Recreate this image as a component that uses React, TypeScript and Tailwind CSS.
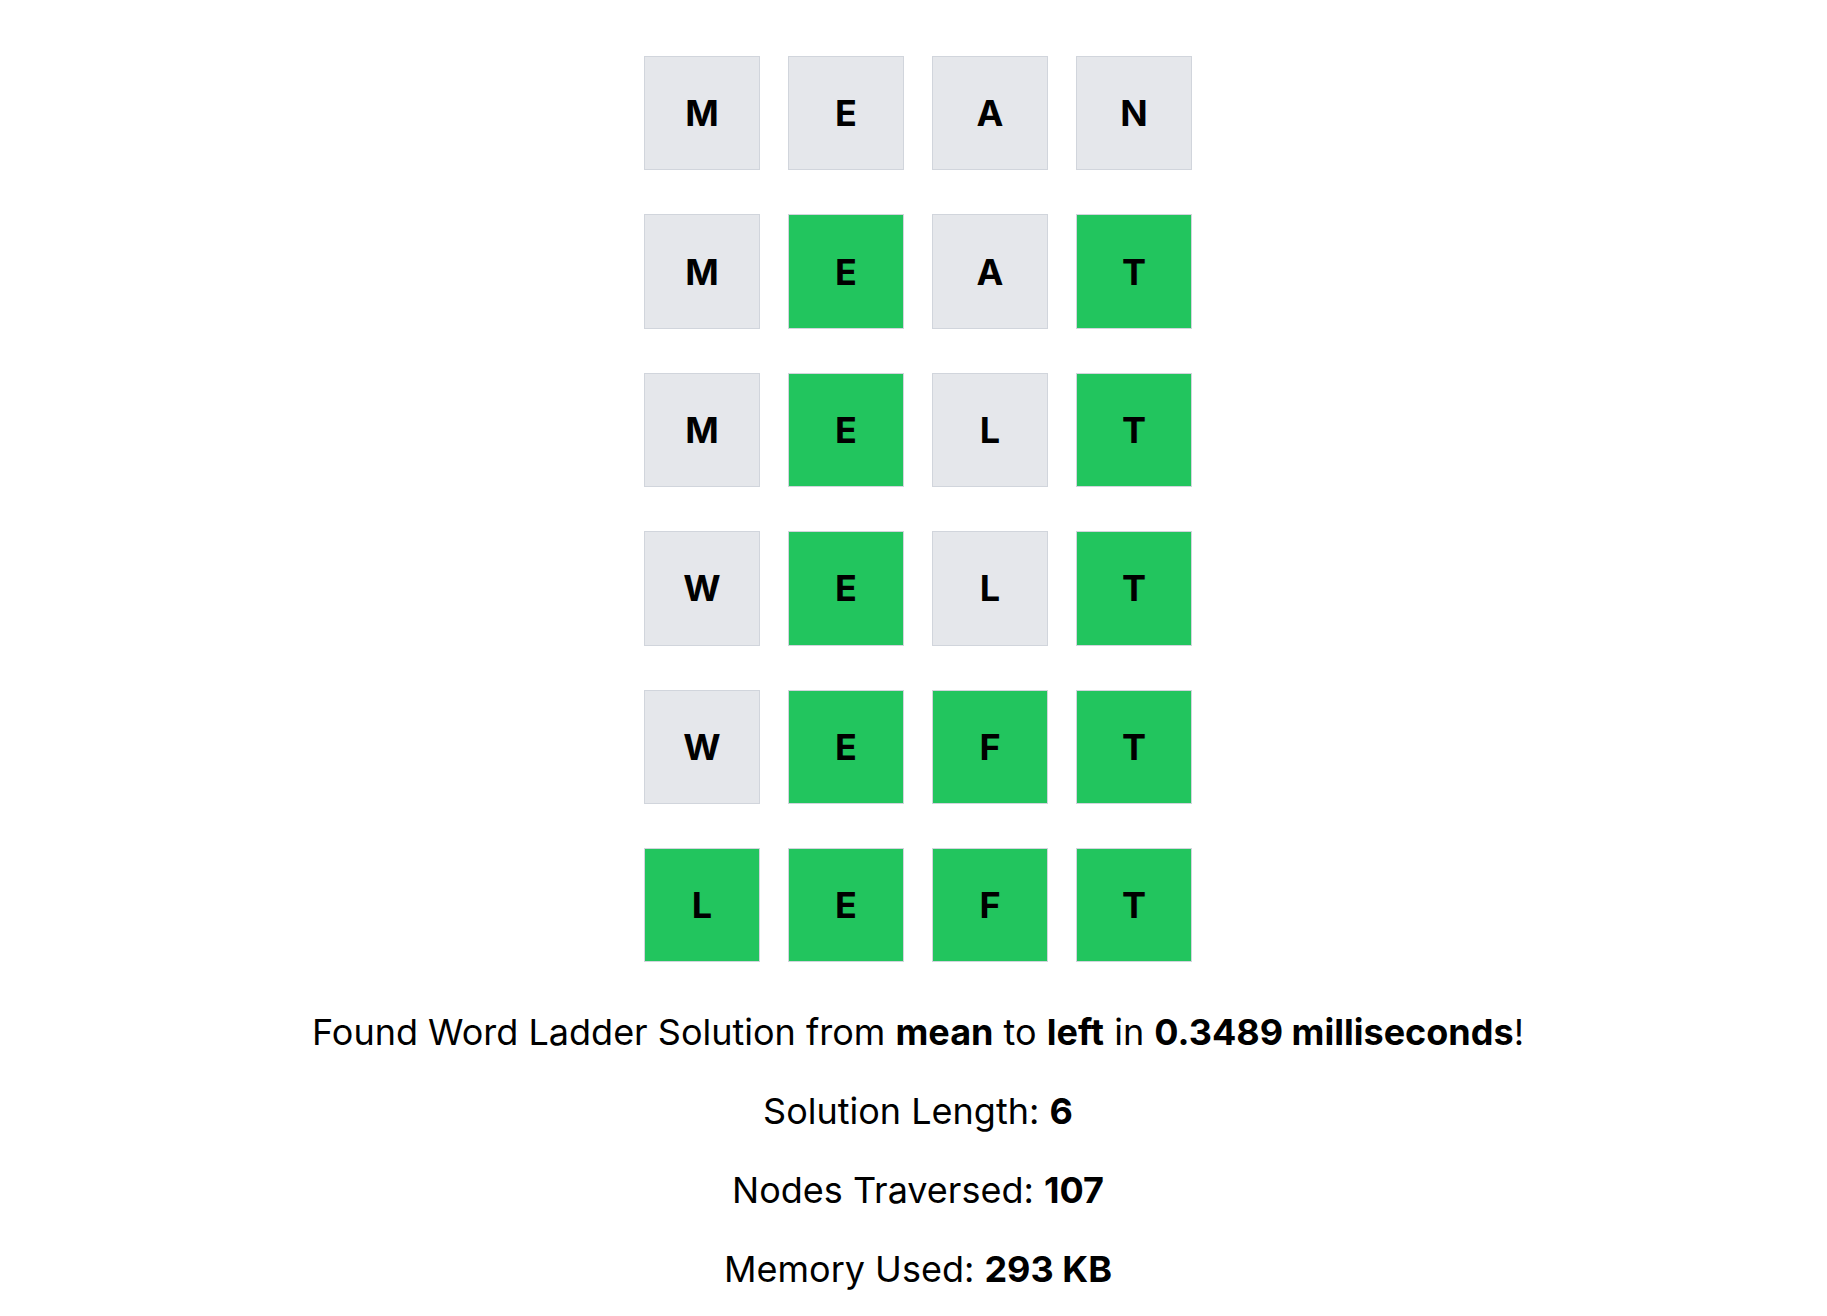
import React from "react";

const rows: { l: string; g: boolean }[][] = [
  [
    { l: "M", g: false },
    { l: "E", g: false },
    { l: "A", g: false },
    { l: "N", g: false },
  ],
  [
    { l: "M", g: false },
    { l: "E", g: true },
    { l: "A", g: false },
    { l: "T", g: true },
  ],
  [
    { l: "M", g: false },
    { l: "E", g: true },
    { l: "L", g: false },
    { l: "T", g: true },
  ],
  [
    { l: "W", g: false },
    { l: "E", g: true },
    { l: "L", g: false },
    { l: "T", g: true },
  ],
  [
    { l: "W", g: false },
    { l: "E", g: true },
    { l: "F", g: true },
    { l: "T", g: true },
  ],
  [
    { l: "L", g: true },
    { l: "E", g: true },
    { l: "F", g: true },
    { l: "T", g: true },
  ],
];

export default function App() {
  return (
    <div
      className="min-h-[1316px] w-full bg-white text-black pl-[9px] pt-[56px]"
      style={{ fontFamily: "Inter, 'Noto Sans', sans-serif" }}
    >
      <div className="flex flex-col items-center gap-[44px]">
        {rows.map((row, i) => (
          <div key={i} className="flex gap-[28px]">
            {row.map((t, j) => (
              <div
                key={j}
                className={
                  t.g
                    ? "flex h-[114.4px] w-[116px] items-center justify-center border border-gray-300 bg-[#22c55e] text-[36px] font-bold"
                    : "flex h-[114.4px] w-[116px] items-center justify-center border border-gray-300 bg-[#e5e7eb] text-[36px] font-bold"
                }
              >
                {t.l}
              </div>
            ))}
          </div>
        ))}
        <div className="mt-[8px] flex flex-col items-center gap-[43px] text-[36px] leading-[36px]">
          <p>
            Found Word Ladder Solution from <b>mean</b> to <b>left</b> in{" "}
            <b>0.3489 milliseconds</b>!
          </p>
          <p>
            Solution Length: <b>6</b>
          </p>
          <p>
            Nodes Traversed: <b>107</b>
          </p>
          <p>
            Memory Used: <b>293 KB</b>
          </p>
        </div>
      </div>
    </div>
  );
}
